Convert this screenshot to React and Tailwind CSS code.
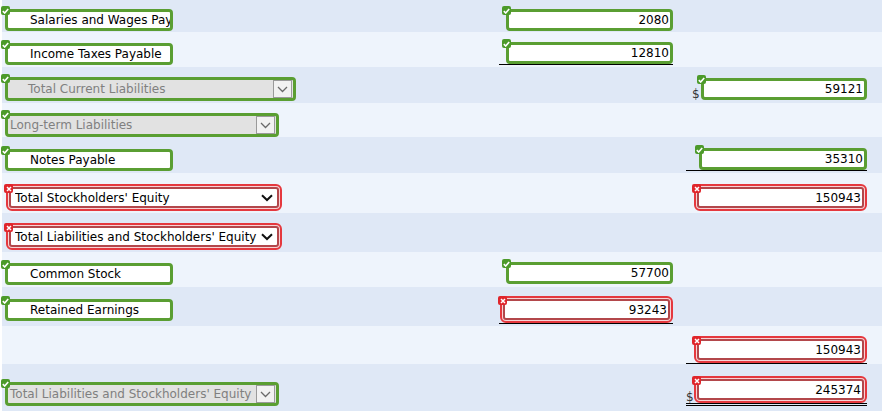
import React from "react";

const GREEN = "border-[#5a9e32]";

function Check() {
  return (
    <span className="absolute -left-[4px] -top-[3px] z-10 flex h-[9px] w-[9px] items-center justify-center rounded-[2px] bg-[#4c9a2a]">
      <svg width="7" height="6" viewBox="0 0 7 6">
        <path d="M0.8 3.2 L2.7 5 L6.2 0.9" stroke="white" strokeWidth="1.6" fill="none" />
      </svg>
    </span>
  );
}

function Cross() {
  return (
    <span className="absolute -left-[2px] top-0 z-10 flex h-[9px] w-[9px] items-center justify-center rounded-[2px] bg-[#e0252b]">
      <svg width="6" height="6" viewBox="0 0 6 6">
        <path d="M1 1 L5 5 M5 1 L1 5" stroke="white" strokeWidth="1.5" fill="none" />
      </svg>
    </span>
  );
}

function GreenBox({ text, width, right, indent = "pl-[22px]" }) {
  return (
    <div className={`relative ${width}`}>
      <Check />
      <div
        className={`flex h-[22px] items-center rounded-[4px] border-[3px] ${GREEN} bg-white overflow-hidden whitespace-nowrap ${
          right ? "justify-end pr-[1px]" : indent
        }`}
      >
        {text}
      </div>
    </div>
  );
}

function RedBox({ text, width }) {
  return (
    <div className={`relative ${width}`}>
      <Cross />
      <div className="rounded-[6px] border-2 border-[#e5383e] bg-[#f8d3d5] p-px">
        <div className="flex h-[21px] items-center justify-end rounded-[3px] border-2 border-[#b3474b] bg-white pr-[1px]">
          {text}
        </div>
      </div>
    </div>
  );
}

function GraySelect({ text, width, indent }) {
  return (
    <div className={`relative ${width}`}>
      <Check />
      <div
        className={`flex h-[24px] items-center rounded-[4px] border-[3px] ${GREEN} bg-[#e2e2e2] text-[#808080] whitespace-nowrap`}
      >
        <span className={`flex-1 overflow-hidden ${indent}`}>{text}</span>
        <span className="mr-[1px] flex h-[18px] w-[19px] items-center justify-center border border-[#9a9a9a] bg-[#f2f2f2]">
          <svg width="11" height="7" viewBox="0 0 11 7">
            <path d="M1 1 L5.5 5.5 L10 1" stroke="#6a6a6a" strokeWidth="1.3" fill="none" />
          </svg>
        </span>
      </div>
    </div>
  );
}

function RedSelect({ text }) {
  return (
    <div className="relative w-[276px]">
      <Cross />
      <div className="rounded-[6px] border-2 border-[#e5383e] bg-[#f8d3d5] p-px">
        <div className="flex h-[21px] items-center rounded-[3px] border-2 border-[#b3474b] bg-white pl-[4px] pr-[4px] whitespace-nowrap text-black">
          <span className="flex-1 overflow-hidden">{text}</span>
          <svg width="12" height="8" viewBox="0 0 12 8">
            <path d="M1 1.2 L6 6 L11 1.2" stroke="#111" strokeWidth="2" fill="none" />
          </svg>
        </div>
      </div>
    </div>
  );
}

function Row({ h, dark, children }) {
  return (
    <div className={`flex ${h} ${dark ? "bg-[#dfe8f6]" : "bg-[#eef4fc]"}`}>{children}</div>
  );
}

export default function App() {
  return (
    <div className="min-h-[416px] w-[885px] bg-white font-['DejaVu_Sans',Verdana,sans-serif] text-[12px] text-black">
      <div className="ml-[2px] w-[880px]">
        {/* Salaries and Wages */}
        <Row h="h-[32px]" dark>
          <div className="w-[497px] pl-[3px] pt-[9px]">
            <GreenBox text="Salaries and Wages Payable" width="w-[168px]" />
          </div>
          <div className="w-[187px] pt-[9px]">
            <div className="flex w-[174px] justify-end">
              <GreenBox text="2080" width="w-[167px]" right />
            </div>
          </div>
        </Row>

        {/* Income Taxes */}
        <Row h="h-[35px]">
          <div className="w-[497px] pl-[3px] pt-[11px]">
            <GreenBox text="Income Taxes Payable" width="w-[168px]" />
          </div>
          <div className="w-[187px] pt-[10px]">
            <div className="flex w-[174px] justify-end border-b border-black">
              <GreenBox text="12810" width="w-[167px]" right />
            </div>
          </div>
        </Row>

        {/* Total Current Liabilities */}
        <Row h="h-[36px]" dark>
          <div className="w-[497px] pl-[3px] pt-[10px]">
            <GraySelect text="Total Current Liabilities" width="w-[291px]" indent="pl-[20px]" />
          </div>
          <div className="w-[187px]" />
          <div className="flex-1 pt-[11px]">
            <div className="flex w-[181px] items-end">
              <span className="ml-[6px] mr-[1px] leading-none text-[#333]">$</span>
              <GreenBox text="59121" width="w-[167px]" right />
            </div>
          </div>
        </Row>

        {/* Long-term Liabilities */}
        <Row h="h-[34px]">
          <div className="w-[497px] pl-[3px] pt-[10px]">
            <GraySelect text="Long-term Liabilities" width="w-[274px]" indent="pl-[2px]" />
          </div>
        </Row>

        {/* Notes Payable */}
        <Row h="h-[36px]" dark>
          <div className="w-[497px] pl-[3px] pt-[12px]">
            <GreenBox text="Notes Payable" width="w-[168px]" />
          </div>
          <div className="w-[187px]" />
          <div className="flex-1 pt-[11px]">
            <div className="flex w-[181px] justify-end border-b border-black">
              <GreenBox text="35310" width="w-[168px]" right />
            </div>
          </div>
        </Row>

        {/* Total Stockholders' Equity */}
        <Row h="h-[40px]">
          <div className="w-[497px] pl-[4px] pt-[11px]">
            <RedSelect text="Total Stockholders' Equity" />
          </div>
          <div className="w-[187px]" />
          <div className="flex-1 pt-[11px]">
            <div className="flex w-[181px] justify-end">
              <RedBox text="150943" width="w-[173px]" />
            </div>
          </div>
        </Row>

        {/* Total Liabilities and Stockholders' Equity */}
        <Row h="h-[39px]" dark>
          <div className="w-[497px] pl-[4px] pt-[10px]">
            <RedSelect text="Total Liabilities and Stockholders' Equity" />
          </div>
        </Row>

        {/* Common Stock */}
        <Row h="h-[35px]">
          <div className="w-[497px] pl-[3px] pt-[11px]">
            <GreenBox text="Common Stock" width="w-[168px]" />
          </div>
          <div className="w-[187px] pt-[10px]">
            <div className="flex w-[174px] justify-end">
              <GreenBox text="57700" width="w-[167px]" right />
            </div>
          </div>
        </Row>

        {/* Retained Earnings */}
        <Row h="h-[39px]" dark>
          <div className="w-[497px] pl-[3px] pt-[12px]">
            <GreenBox text="Retained Earnings" width="w-[168px]" />
          </div>
          <div className="w-[187px] pt-[9px]">
            <div className="flex w-[174px] justify-end border-b border-black">
              <RedBox text="93243" width="w-[173px]" />
            </div>
          </div>
        </Row>

        {/* subtotal */}
        <Row h="h-[38px]">
          <div className="w-[497px]" />
          <div className="w-[187px]" />
          <div className="flex-1 pt-[10px]">
            <div className="flex w-[181px] justify-end border-b border-black">
              <RedBox text="150943" width="w-[173px]" />
            </div>
          </div>
        </Row>

        {/* Total Liabilities and Stockholders' Equity */}
        <Row h="h-[47px]" dark>
          <div className="w-[497px] pl-[3px] pt-[18px]">
            <GraySelect
              text="Total Liabilities and Stockholders' Equity"
              width="w-[274px]"
              indent="pl-[2px]"
            />
          </div>
          <div className="w-[187px]" />
          <div className="flex-1 pt-[12px]">
            <div className="flex w-[181px] items-end justify-between border-b-[3px] border-double border-black">
              <span className="leading-none text-[#333]">$</span>
              <RedBox text="245374" width="w-[173px]" />
            </div>
          </div>
        </Row>
      </div>
    </div>
  );
}
